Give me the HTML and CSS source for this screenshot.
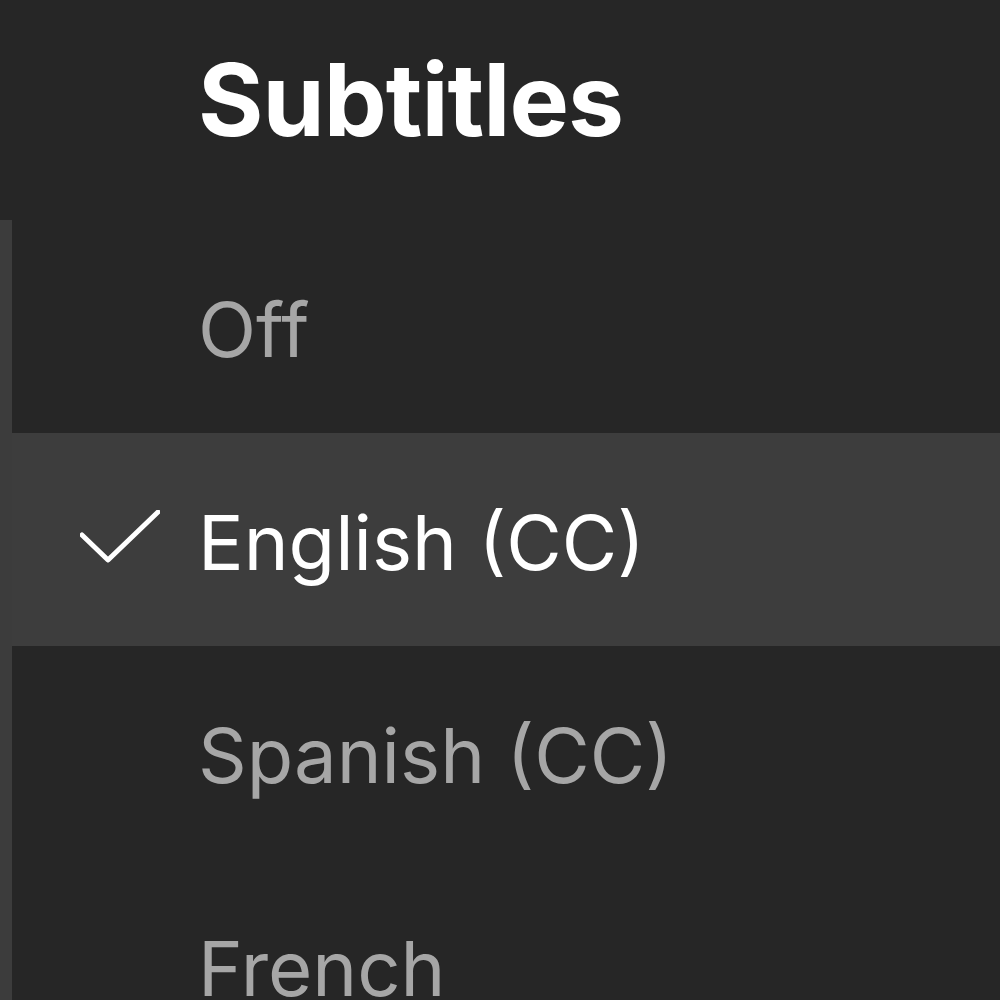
FILE: index.html
```html
<!DOCTYPE html>
<html>
<head>
<meta charset="utf-8">
<link rel="stylesheet" href="styles.css">
</head>
<body>
<div class="panel">
  <h1 class="title">Subtitles</h1>
  <ul class="list">
    <li class="item"><span class="check"></span><span class="label">Off</span></li>
    <li class="item selected"><span class="check"><svg viewBox="0 0 80 54" width="80" height="54"><polyline points="2,25 28,50 78,2" fill="none" stroke="#ffffff" stroke-width="5" stroke-linecap="round" stroke-linejoin="round"/></svg></span><span class="label">English (CC)</span></li>
    <li class="item"><span class="check"></span><span class="label">Spanish (CC)</span></li>
    <li class="item"><span class="check"></span><span class="label">French</span></li>
  </ul>
</div>
</body>
</html>
```
FILE: styles.css
```css
html, body {
  margin: 0;
  padding: 0;
  background: #262626;
  width: 1000px;
  height: 1000px;
  overflow: hidden;
  font-family: Inter, "Liberation Sans", sans-serif;
}
.panel {
  display: flex;
  flex-direction: column;
  height: 1000px;
  overflow: hidden;
}
.title {
  margin: 0;
  flex: none;
  height: 220px;
  box-sizing: border-box;
  padding: 40px 0 0 198px;
  font-size: 100px;
  font-weight: 700;
  color: #ffffff;
  line-height: 120px;
  letter-spacing: -1px;
}
.list {
  list-style: none;
  margin: 0;
  padding: 0 0 0 12px;
  background: #3c3c3c;
  flex: none;
}
.item {
  display: flex;
  align-items: center;
  height: 213px;
  box-sizing: border-box;
  padding-top: 4px;
  background: #262626;
  color: #a6a6a6;
  font-size: 76px;
}
.item.selected {
  background: #3d3d3d;
  color: #ffffff;
}
.check {
  width: 186px;
  flex: none;
  display: flex;
  justify-content: flex-start;
  padding-left: 68px;
  box-sizing: border-box;
}
.check svg {
  display: block;
  margin-top: -10px;
}
.label {
  line-height: 1;
}
```
